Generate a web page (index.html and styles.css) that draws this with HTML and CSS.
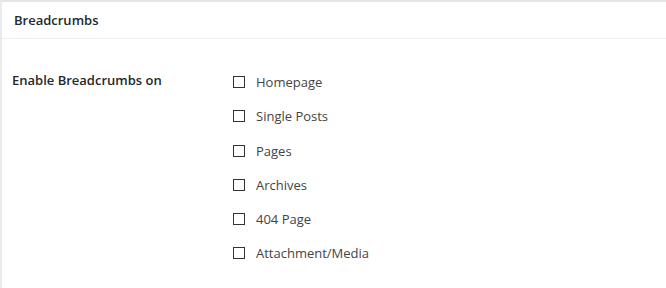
FILE: index.html
```html
<!DOCTYPE html>
<html lang="en">
<head>
    <meta charset="UTF-8">
    <title>Breadcrumbs</title>
    <link rel="stylesheet" href="styles.css">
</head>
<body>
    <div class="panel">
        <div class="panel-header">
            <h3>Breadcrumbs</h3>
        </div>
        <div class="panel-body">
            <div class="field-label">Enable Breadcrumbs on</div>
            <ul class="options">
                <li><label><span class="box"></span>Homepage</label></li>
                <li><label><span class="box"></span>Single Posts</label></li>
                <li><label><span class="box"></span>Pages</label></li>
                <li><label><span class="box"></span>Archives</label></li>
                <li><label><span class="box"></span>404 Page</label></li>
                <li><label><span class="box"></span>Attachment/Media</label></li>
            </ul>
        </div>
    </div>
</body>
</html>
```

FILE: styles.css
```css
body {
    margin: 0;
    background: #fff;
    font-family: "Open Sans", "Noto Sans", sans-serif;
    font-size: 13px;
    color: #23282d;
}

.panel {
    border-top: 2px solid #e5e5e5;
    border-left: 2px solid #ebebeb;
    height: 286px;
}

.panel-header {
    border-bottom: 1px solid #eeeeee;
    padding: 0 12px;
    height: 36px;
    display: flex;
    align-items: center;
}

.panel-header h3 {
    margin: 0;
    font-size: 13px;
    font-weight: 600;
}

.panel-body {
    display: flex;
    padding: 32px 10px 0;
}

.field-label {
    width: 221px;
    font-weight: 600;
}

.options {
    list-style: none;
    margin: 2px 0 0;
    padding: 0;
    display: flex;
    flex-direction: column;
    gap: 16.25px;
}

.options label {
    display: flex;
    align-items: center;
    color: #444;
    line-height: 18px;
}

.box {
    width: 10px;
    height: 10px;
    border: 1.5px solid #333;
    margin-right: 11px;
}
```
